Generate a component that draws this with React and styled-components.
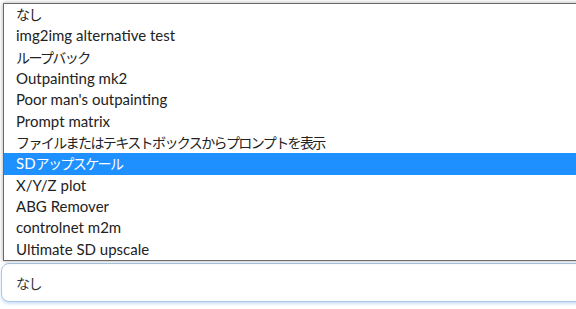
import React from 'react'
import styled, {createGlobalStyle} from 'styled-components'

const GlobalStyle = createGlobalStyle`
  html, body {
    margin: 0;
    padding: 0;
    background: #fff;
    overflow: hidden;
  }
  body {
    font-family: "Lato", "Noto Sans CJK JP", sans-serif;
  }
`

const Page = styled.div`
  width: 576px;
  height: 309px;
  overflow: hidden;
  background: #fff;
`

const LabelStrip = styled.div`
  height: 3px;
  overflow: hidden;
  display: flex;
  align-items: flex-end;
  padding-left: 8px;
  .label{
    font-size: 15px;
    line-height: 18px;
    color: #1f2937;
    white-space: nowrap;
  }
`

const Menu = styled.ul`
  list-style: none;
  margin: 0 0 0 3px;
  padding: 0;
  width: 620px;
  height: 256px;
  border: 1px solid #6b6b6b;
  background: #fff;
  box-shadow: 0 0 4px rgba(0,0,0,0.35);
  position: relative;
  z-index: 2;
`

const Option = styled.li`
  height: 21.33px;
  line-height: 21.33px;
  padding-left: 12px;
  font-size: 15px;
  white-space: nowrap;
  color: ${p => (p.$active ? '#fff' : '#222')};
  background: ${p => (p.$active ? '#1e90ff' : 'transparent')};
`

const Jp = styled.span`
  font-family: "Noto Sans CJK JP", sans-serif;
  font-size: 14px;
  letter-spacing: -1.6px;
`

const Select = styled.div`
  margin: 2px 0 0 1px;
  width: 620px;
  height: 39px;
  box-sizing: border-box;
  border: 1px solid #a9c8e8;
  border-radius: 8px;
  box-shadow: 0 2px 3px rgba(120,170,230,0.35);
  display: flex;
  align-items: center;
  padding-left: 14px;
  font-size: 15px;
  color: #333;
  background: #fff;
`

const options = [
  'なし',
  'img2img alternative test',
  'ループバック',
  'Outpainting mk2',
  "Poor man's outpainting",
  'Prompt matrix',
  'ファイルまたはテキストボックスからプロンプトを表示',
  'SDアップスケール',
  'X/Y/Z plot',
  'ABG Remover',
  'controlnet m2m',
  'Ultimate SD upscale',
]

// japanese runs use the cjk font, set tighter like the system fallback
const Text = ({children}) =>
  children.split(/([\u3040-\u30ff\u4e00-\u9fff]+)/).map((part, i) =>
    i % 2 ? <Jp key={i}>{part}</Jp> : part
  )

const App = () => {
  return (
    <Page>
      <GlobalStyle />
      <LabelStrip><span className="label">Tiled VAE</span></LabelStrip>
      <Menu>
        {options.map(o => (
          <Option key={o} $active={o === 'SDアップスケール'}><Text>{o}</Text></Option>
        ))}
      </Menu>
      <Select><Text>なし</Text></Select>
    </Page>
  )
}

export default App
